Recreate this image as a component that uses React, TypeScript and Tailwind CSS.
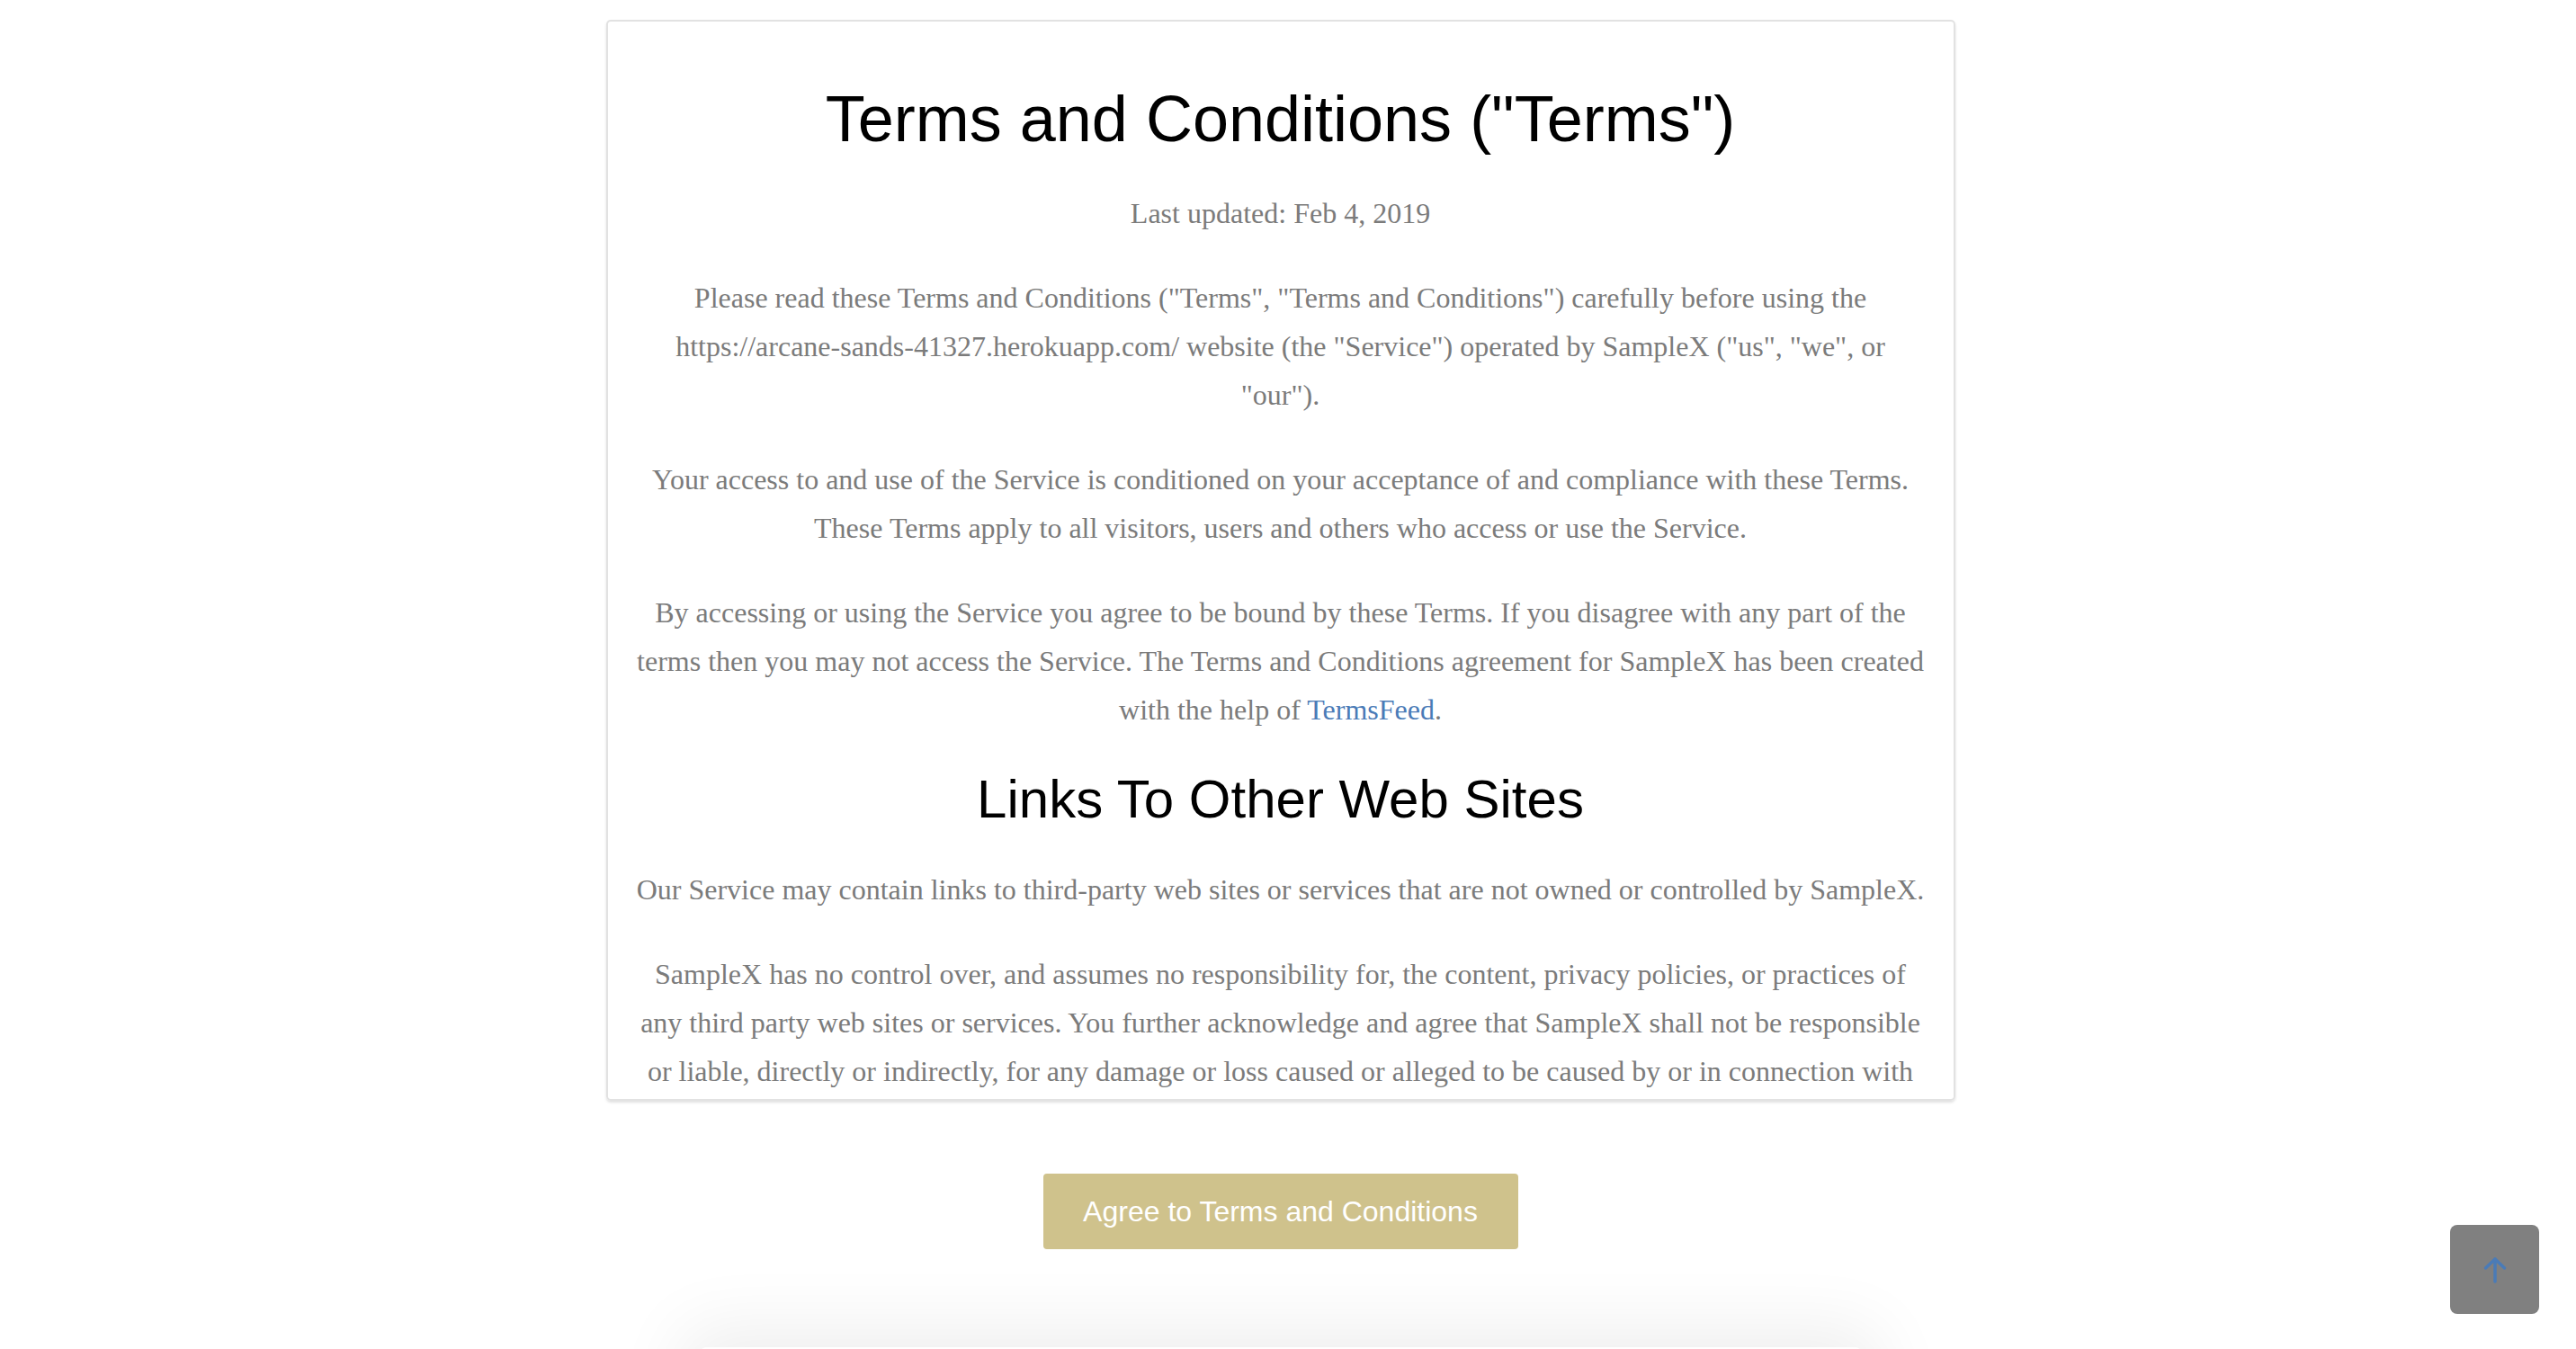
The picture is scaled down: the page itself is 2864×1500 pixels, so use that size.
export default function App() {
  return (
    <div className="relative h-[1500px] w-full overflow-hidden bg-white pr-[17px]">
      {/* Terms card */}
      <div className="mx-auto mt-[22px] h-[1202px] w-[1500px] overflow-hidden rounded-[5px] border-2 border-[#e2e2e2] shadow-[0_2px_3px_rgba(0,0,0,0.12)]">
        <div className="flex flex-col gap-[40px] px-[28px] pt-[69px] text-center font-['Liberation_Serif',serif] text-[32px] leading-[54px] text-[#7b7b7b]">
          <h1 className="mb-[-2px] font-['Liberation_Sans',Arial,sans-serif] text-[72px] leading-[79px] text-black">
            Terms and Conditions ("Terms")
          </h1>
          <p>Last updated: Feb 4, 2019</p>
          <p>
            Please read these Terms and Conditions ("Terms", "Terms and Conditions") carefully before using the
            https://arcane-sands-41327.herokuapp.com/ website (the "Service") operated by SampleX ("us", "we", or
            "our").
          </p>
          <p>
            Your access to and use of the Service is conditioned on your acceptance of and compliance with these Terms.
            These Terms apply to all visitors, users and others who access or use the Service.
          </p>
          <p>
            By accessing or using the Service you agree to be bound by these Terms. If you disagree with any part of the
            terms then you may not access the Service. The Terms and Conditions agreement for SampleX has been created
            with the help of <a className="text-[#4a7bb7]">TermsFeed</a>.
          </p>
          <h2 className="font-['Liberation_Sans',Arial,sans-serif] text-[60px] leading-[66px] text-black">
            Links To Other Web Sites
          </h2>
          <p>Our Service may contain links to third-party web sites or services that are not owned or controlled by SampleX.</p>
          <p>
            SampleX has no control over, and assumes no responsibility for, the content, privacy policies, or practices of
            any third party web sites or services. You further acknowledge and agree that SampleX shall not be responsible
            or liable, directly or indirectly, for any damage or loss caused or alleged to be caused by or in connection with
            use of or reliance on any such content, goods or services available on or through any such web sites or services.
          </p>
        </div>
      </div>

      {/* Agree button */}
      <div className="mt-[81px] flex justify-center">
        <button className="h-[84px] w-[528px] rounded-[4px] bg-[#cfc28c] font-['Liberation_Sans',Arial,sans-serif] text-[32px] text-white">
          Agree to Terms and Conditions
        </button>
      </div>

      {/* next card peeking from below */}
      <div className="mx-auto mt-[109px] h-[300px] w-[1290px] rounded-[6px] bg-white shadow-[0_0_80px_20px_rgba(0,0,0,0.07)]" />

      {/* scroll to top */}
      <button className="absolute bottom-[39px] right-[41px] flex h-[99px] w-[99px] items-center justify-center rounded-[8px] bg-[#808080]">
        <svg width="99" height="99" viewBox="0 0 99 99" fill="none" stroke="#4a7bb7" strokeWidth="3.5" strokeLinecap="round" strokeLinejoin="round">
          <path d="M50 38 L50 63" />
          <path d="M39.5 48 L50 38 L60.5 48" />
        </svg>
      </button>
    </div>
  );
}
